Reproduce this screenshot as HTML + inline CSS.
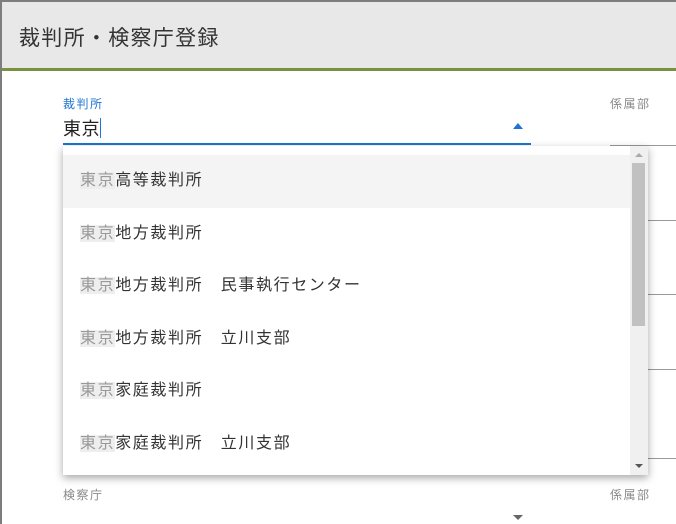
<!DOCTYPE html>
<html><head><meta charset="utf-8"><style>
*{margin:0;padding:0;box-sizing:border-box}
body{width:676px;height:524px;overflow:hidden;background:#7d7d7d;font-family:"Liberation Sans","Noto Sans CJK JP",sans-serif;position:relative}
.dlg{position:absolute;left:2px;top:2px;right:0;bottom:0;background:#fff}
.hd{height:69px;background:#e8e8e8;border-bottom:3px solid #7a9140;font-size:21px;letter-spacing:1.3px;color:#333;padding:20px 0 0 17px}
.a{position:absolute}
.lbl{font-size:12px;color:#888;letter-spacing:1.5px}
.line{position:absolute;height:1px;background:#999}
.dd{position:absolute;left:63px;top:146px;width:585px;height:329px;background:#fff;box-shadow:0 3px 8px rgba(0,0,0,.35);overflow:hidden}
.it{height:52.5px;font-size:16px;letter-spacing:1.6px;color:#333;padding-left:17px;line-height:52px}
.it span{color:#999;background:#eee}
.sb{position:absolute;right:0;top:0;width:18px;height:100%;background:#f0f0f0}
</style></head><body>
<div class="dlg">
<div class="hd">裁判所・検察庁登録</div>
</div>
<div class="a lbl" style="left:63px;top:95px;color:#1e74d0">裁判所</div>
<div class="a" style="left:63px;top:115px;font-size:18px;color:#222;letter-spacing:0.5px">東京<span style="display:inline-block;width:1px;height:20px;background:#1e74d0;vertical-align:-3px"></span></div>
<div class="a" style="left:513px;top:123px;width:0;height:0;border-left:5px solid transparent;border-right:5px solid transparent;border-bottom:6px solid #1e74d0"></div>
<div class="a" style="left:63px;top:143px;width:468px;height:2px;background:#1e74d0"></div>
<div class="a lbl" style="left:610px;top:95px">係属部</div>
<div class="line" style="left:610px;top:145px;width:66px"></div>
<div class="line" style="left:648px;top:220px;width:28px"></div>
<div class="line" style="left:648px;top:294px;width:28px"></div>
<div class="line" style="left:648px;top:369px;width:28px"></div>
<div class="line" style="left:648px;top:458px;width:28px"></div>
<div class="dd">
<div style="height:9px"></div>
<div class="it" style="background:#f4f4f4"><span>東京</span>高等裁判所</div>
<div class="it"><span>東京</span>地方裁判所</div>
<div class="it"><span>東京</span>地方裁判所　民事執行センター</div>
<div class="it"><span>東京</span>地方裁判所　立川支部</div>
<div class="it"><span>東京</span>家庭裁判所</div>
<div class="it"><span>東京</span>家庭裁判所　立川支部</div>
<div class="sb">
<div class="a" style="left:5px;top:7px;border-left:4px solid transparent;border-right:4px solid transparent;border-bottom:4px solid #aaa"></div>
<div class="a" style="left:2px;top:17px;width:13px;height:163px;background:#c1c1c1"></div>
<div class="a" style="left:5px;bottom:7px;border-left:4px solid transparent;border-right:4px solid transparent;border-top:4px solid #555"></div>
</div>
</div>
<div class="a lbl" style="left:63px;top:486px">検察庁</div>
<div class="a lbl" style="left:610px;top:486px">係属部</div>
<div class="a" style="left:513px;top:515px;border-left:5px solid transparent;border-right:5px solid transparent;border-top:5px solid #666"></div>
</body></html>
